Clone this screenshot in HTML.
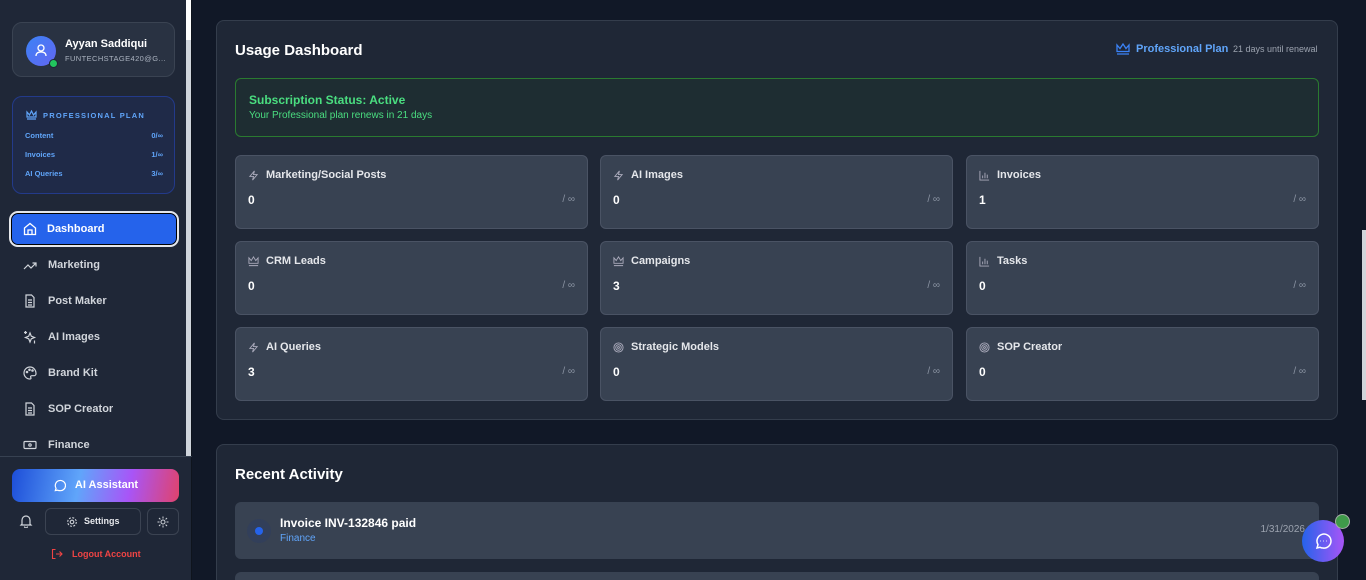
<!DOCTYPE html>
<html><head><meta charset="utf-8">
<style>
*{box-sizing:border-box;margin:0;padding:0}
html,body{width:1366px;height:580px;overflow:hidden}
body{background:#111827;font-family:"Liberation Sans",sans-serif;color:#fff;position:relative}
.sb{position:absolute;left:0;top:0;width:192px;height:580px;background:#1f2737;border-right:1px solid #0f141d}
.sbs{position:absolute;left:186px;top:0;width:5px;height:456px;background:#cfd4db}
.sbs:before{content:"";position:absolute;left:0;top:0;width:5px;height:40px;background:#fff}
.prof{position:absolute;left:12px;top:22px;width:163px;height:55px;background:#293242;border:1px solid #3a4352;border-radius:10px}
.av{position:absolute;left:13px;top:13px;width:30px;height:30px;border-radius:50%;background:linear-gradient(135deg,#3b82f6,#6366f1)}
.dot{position:absolute;left:36px;top:36px;width:9px;height:9px;border-radius:50%;background:#22c55e;border:1px solid #1f2737}
.pn{position:absolute;left:52px;top:15px;font-size:11px;font-weight:bold}
.pe{position:absolute;left:52px;top:31px;font-size:7.5px;color:#aab2bf;letter-spacing:.4px}
.plan{position:absolute;left:12px;top:96px;width:163px;height:98px;background:#1f2a48;border:1px solid #233a8a;border-radius:10px;color:#60a5fa;font-size:7.5px;font-weight:bold}
.plan .h{position:absolute;left:30px;top:14px;letter-spacing:1.2px;font-size:7.5px}
.plan .r{position:absolute;left:12px;width:138px;display:flex;justify-content:space-between}
.nav{position:absolute;left:48px;font-size:11px;font-weight:bold;color:#d1d5db}
.ic{position:absolute;left:23px;width:14px;height:14px}
.dash{position:absolute;left:9px;top:211px;width:170px;height:36px;border-radius:9px;background:#2563eb;border:2px solid #e5e7eb;box-shadow:0 0 0 1px #000 inset}
.div{position:absolute;left:0;top:456px;width:192px;border-top:1px solid #374151}
.ai{position:absolute;left:12px;top:469px;width:167px;height:33px;border-radius:8px;background:linear-gradient(100deg,#1d4ed8,#60a5fa 40%,#a855f7 70%,#e0436c);font-size:11px;font-weight:bold;text-align:center;line-height:33px}
.btn{position:absolute;top:508px;height:27px;border:1px solid #3b4352;border-radius:6px}
.main{position:absolute;left:216px;width:1122px;background:#1f2736;border:1px solid #343d4c;border-radius:8px}
.stat{position:absolute;width:353px;height:74px;background:#384252;border:1px solid #4a5364;border-radius:6px}
.stat .t{position:absolute;left:30px;top:13px;font-size:11px;font-weight:bold;color:#e5e7eb}
.stat .v{position:absolute;left:12px;top:37px;font-size:12px;font-weight:bold}
.stat .inf{position:absolute;right:12px;top:38px;font-size:10px;color:#8b94a3}
.stat svg{position:absolute;left:12px;top:14px}
</style></head><body>
<div class="sb">
<div class="sbs"></div>
<div class="prof"><div class="av"><svg width="30" height="30" viewBox="0 0 30 30" fill="none" stroke="#fff" stroke-width="1.3"><circle cx="15" cy="12" r="3"/><path d="M10 20c0-3 2-4 5-4s5 1 5 4"/></svg></div><div class="dot"></div>
<div class="pn">Ayyan Saddiqui</div><div class="pe">FUNTECHSTAGE420@G...</div></div>
<div class="plan">
<svg style="position:absolute;left:13px;top:13px" width="11" height="10" viewBox="0 0 11 10" fill="none" stroke="#60a5fa" stroke-width="1.2"><path d="M1 2l2.5 3L5.5 1l2 4L10 2v5H1z M1 9h9"/></svg>
<div class="h">PROFESSIONAL PLAN</div>
<div class="r" style="top:34px"><span>Content</span><span>0/∞</span></div>
<div class="r" style="top:53px"><span>Invoices</span><span>1/∞</span></div>
<div class="r" style="top:72px"><span>AI Queries</span><span>3/∞</span></div>
</div>
<div class="dash"></div>
<svg class="ic" style="top:222px" viewBox="0 0 14 14" fill="none" stroke="#fff" stroke-width="1.3"><path d="M1.5 6L7 1.5 12.5 6v6.5h-11z M5 12.5V8h4v4.5"/></svg>
<div class="nav" style="top:223px;left:47px;color:#fff">Dashboard</div>
<svg class="ic" style="top:258px" viewBox="0 0 14 14" fill="none" stroke="#d1d5db" stroke-width="1.2"><path d="M1 11l4-4 3 3 5-5 M9.5 5H13v3.5"/></svg>
<div class="nav" style="top:259px">Marketing</div>
<svg class="ic" style="top:294px" viewBox="0 0 14 14" fill="none" stroke="#d1d5db" stroke-width="1.2"><path d="M3 1h5.5L11 3.5V13H3z M5 6h4 M5 8.5h4 M5 11h4"/></svg>
<div class="nav" style="top:295px">Post Maker</div>
<svg class="ic" style="top:330px" viewBox="0 0 14 14" fill="none" stroke="#d1d5db" stroke-width="1.2"><path d="M7 3l1.3 3.2L11.5 7.5 8.3 8.8 7 12 5.7 8.8 2.5 7.5 5.7 6.2z M2.5 1v3 M1 2.5h3 M11.5 10.5v3"/></svg>
<div class="nav" style="top:331px">AI Images</div>
<svg class="ic" style="top:366px" viewBox="0 0 14 14" fill="none" stroke="#d1d5db" stroke-width="1.2"><path d="M7 1a6 6 0 100 12c1 0 1.3-.8.8-1.5-.6-.8 0-1.8 1-1.8H11a2 2 0 002-2C13 3.8 10.3 1 7 1z"/><circle cx="4" cy="6" r=".7"/><circle cx="6.5" cy="3.8" r=".7"/><circle cx="9.5" cy="4.5" r=".7"/></svg>
<div class="nav" style="top:367px">Brand Kit</div>
<svg class="ic" style="top:402px" viewBox="0 0 14 14" fill="none" stroke="#d1d5db" stroke-width="1.2"><path d="M3 1h5.5L11 3.5V13H3z M5 6h4 M5 8.5h4 M5 11h4"/></svg>
<div class="nav" style="top:403px">SOP Creator</div>
<svg class="ic" style="top:438px" viewBox="0 0 14 14" fill="none" stroke="#d1d5db" stroke-width="1.2"><rect x="1" y="3.5" width="12" height="7" rx="1"/><circle cx="7" cy="7" r="1.2"/></svg>
<div class="nav" style="top:439px">Finance</div>
<div class="div"></div>
<div class="ai"><svg style="position:absolute;left:41px;top:10px" width="13" height="13" viewBox="0 0 14 14" fill="none" stroke="#fff" stroke-width="1.3"><path d="M2.5 12.5l.8-2.5A5.5 5.5 0 117 12.5a5.5 5.5 0 01-2.3-.5z"/></svg><span style="margin-left:22px">AI Assistant</span></div>
<svg style="position:absolute;left:19px;top:514px" width="14" height="14" viewBox="0 0 14 14" fill="none" stroke="#d1d5db" stroke-width="1.2"><path d="M3 10V6a4 4 0 018 0v4l1 1H2z M5.5 12.5a1.5 1.5 0 003 0"/></svg>
<div class="btn" style="left:45px;width:96px"><svg style="position:absolute;left:20px;top:7px" width="12" height="12" viewBox="0 0 12 12" fill="none" stroke="#d1d5db" stroke-width="1.1"><circle cx="6" cy="6" r="1.8"/><circle cx="6" cy="6" r="4.3" stroke-dasharray="2 1.4"/></svg><span style="position:absolute;left:38px;top:7px;font-size:9px;font-weight:bold;color:#e5e7eb">Settings</span></div>
<div class="btn" style="left:147px;width:32px"><svg style="position:absolute;left:9px;top:7px" width="12" height="12" viewBox="0 0 12 12" fill="none" stroke="#d1d5db" stroke-width="1"><circle cx="6" cy="6" r="2"/><path d="M6 0.5v2M6 9.5v2M0.5 6h2M9.5 6h2M2 2l1.4 1.4M8.6 8.6L10 10M2 10l1.4-1.4M8.6 3.4L10 2"/></svg></div>
<svg style="position:absolute;left:51px;top:548px" width="12" height="12" viewBox="0 0 12 12" fill="none" stroke="#ef4444" stroke-width="1.1"><path d="M4.5 1.5h-3v9h3 M5 6h6 M8.5 3.5L11 6 8.5 8.5"/></svg>
<div style="position:absolute;left:72px;top:549px;font-size:9px;font-weight:bold;color:#ef4444">Logout Account</div>
</div>

<div class="main" style="top:20px;height:400px">
<div style="position:absolute;left:18px;top:21px;font-size:15px;font-weight:bold">Usage Dashboard</div>
<svg style="position:absolute;left:899px;top:22px" width="14" height="12" viewBox="0 0 14 12" fill="none" stroke="#3b82f6" stroke-width="1.3"><path d="M1 2l3 3.5L7 1l3 4.5L13 2v6.5H1z M1 11h12"/></svg>
<div style="position:absolute;left:919px;top:22px;font-size:11px;font-weight:bold;color:#60a5fa">Professional Plan</div>
<div style="position:absolute;left:1016px;top:23px;font-size:9px;color:#9ca3af">21 days until renewal</div>
<div style="position:absolute;left:18px;top:57px;width:1084px;height:59px;background:#1e2d32;border:1px solid #2a7a30;border-radius:6px">
<div style="position:absolute;left:13px;top:14px;font-size:12px;font-weight:bold;color:#4ade80">Subscription Status: Active</div>
<div style="position:absolute;left:13px;top:31px;font-size:10px;color:#4ade80">Your Professional plan renews in 21 days</div></div>
</div>

<div class="main" style="top:444px;height:136px;border-bottom:none;border-radius:8px 8px 0 0">
<div style="position:absolute;left:18px;top:21px;font-size:15px;font-weight:bold">Recent Activity</div>
<div style="position:absolute;left:18px;top:57px;width:1084px;height:57px;background:#384252;border-radius:6px">
<div style="position:absolute;left:12px;top:17px;width:24px;height:24px;border-radius:50%;background:#323f5a"></div>
<div style="position:absolute;left:20px;top:25px;width:8px;height:8px;border-radius:50%;background:#2563eb"></div>
<div style="position:absolute;left:45px;top:14px;font-size:12px;font-weight:bold">Invoice INV-132846 paid</div>
<div style="position:absolute;left:45px;top:31px;font-size:10px;color:#60a5fa">Finance</div>
<div style="position:absolute;right:14px;top:22px;font-size:10px;color:#9ca3af">1/31/2026</div></div>
<div style="position:absolute;left:18px;top:127px;width:1084px;height:9px;background:#384252;border-radius:6px 6px 0 0"></div>
</div>

<div class="stat" style="left:235px;top:155px"><svg width="11" height="11" viewBox="0 0 12 12" fill="none" stroke="#aab" stroke-width="1"><path d="M7 1L2 7h4l-1 4 5-6H6z"/></svg><div class="t">Marketing/Social Posts</div><div class="v">0</div><div class="inf">/ ∞</div></div>
<div class="stat" style="left:600px;top:155px"><svg width="11" height="11" viewBox="0 0 12 12" fill="none" stroke="#aab" stroke-width="1"><path d="M7 1L2 7h4l-1 4 5-6H6z"/></svg><div class="t">AI Images</div><div class="v">0</div><div class="inf">/ ∞</div></div>
<div class="stat" style="left:966px;top:155px"><svg width="11" height="11" viewBox="0 0 12 12" fill="none" stroke="#aab" stroke-width="1"><path d="M1 1v10h10 M4 9V6 M6.5 9V3 M9 9V5"/></svg><div class="t">Invoices</div><div class="v">1</div><div class="inf">/ ∞</div></div>
<div class="stat" style="left:235px;top:241px"><svg width="11" height="11" viewBox="0 0 12 12" fill="none" stroke="#aab" stroke-width="1"><path d="M1 2l2.5 3L6 1l2.5 4L11 2v6H1z M1 10.5h10"/></svg><div class="t">CRM Leads</div><div class="v">0</div><div class="inf">/ ∞</div></div>
<div class="stat" style="left:600px;top:241px"><svg width="11" height="11" viewBox="0 0 12 12" fill="none" stroke="#aab" stroke-width="1"><path d="M1 2l2.5 3L6 1l2.5 4L11 2v6H1z M1 10.5h10"/></svg><div class="t">Campaigns</div><div class="v">3</div><div class="inf">/ ∞</div></div>
<div class="stat" style="left:966px;top:241px"><svg width="11" height="11" viewBox="0 0 12 12" fill="none" stroke="#aab" stroke-width="1"><path d="M1 1v10h10 M4 9V6 M6.5 9V3 M9 9V5"/></svg><div class="t">Tasks</div><div class="v">0</div><div class="inf">/ ∞</div></div>
<div class="stat" style="left:235px;top:327px"><svg width="11" height="11" viewBox="0 0 12 12" fill="none" stroke="#aab" stroke-width="1"><path d="M7 1L2 7h4l-1 4 5-6H6z"/></svg><div class="t">AI Queries</div><div class="v">3</div><div class="inf">/ ∞</div></div>
<div class="stat" style="left:600px;top:327px"><svg width="11" height="11" viewBox="0 0 12 12" fill="none" stroke="#aab" stroke-width="1"><circle cx="6" cy="6" r="5"/><circle cx="6" cy="6" r="3"/><circle cx="6" cy="6" r="1"/></svg><div class="t">Strategic Models</div><div class="v">0</div><div class="inf">/ ∞</div></div>
<div class="stat" style="left:966px;top:327px"><svg width="11" height="11" viewBox="0 0 12 12" fill="none" stroke="#aab" stroke-width="1"><circle cx="6" cy="6" r="5"/><circle cx="6" cy="6" r="3"/><circle cx="6" cy="6" r="1"/></svg><div class="t">SOP Creator</div><div class="v">0</div><div class="inf">/ ∞</div></div>

<div style="position:absolute;left:1362px;top:230px;width:4px;height:170px;background:#d1d5db"></div>
<div style="position:absolute;left:1302px;top:520px;width:42px;height:42px;border-radius:50%;background:linear-gradient(90deg,#2563eb,#a855f7)"><svg style="position:absolute;left:12px;top:12px" width="18" height="18" viewBox="0 0 18 18" fill="none" stroke="#fff" stroke-width="1.5"><path d="M3 16l1-3.3A7 7 0 119 16a7 7 0 01-3-.7z"/><path d="M6 9h.5M9 9h.5M12 9h.5"/></svg></div>
<div style="position:absolute;left:1335px;top:514px;width:15px;height:15px;border-radius:50%;background:#3f9a4a;border:1px solid #a7b0a8"></div>
</body></html>
